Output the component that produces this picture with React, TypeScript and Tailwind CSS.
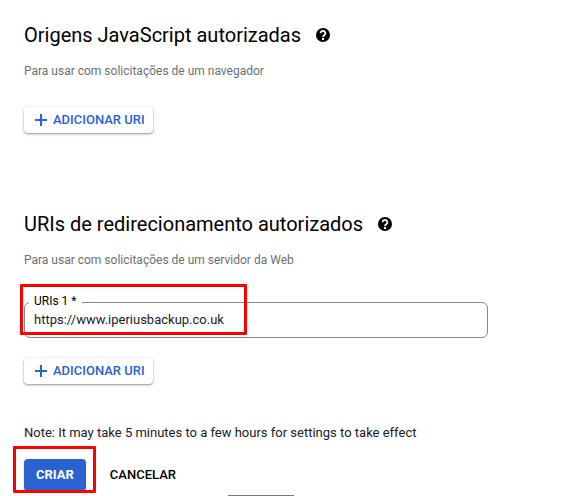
import { useState } from "react";

function HelpIcon({ label }: { label: string }) {
  return (
    <button type="button" aria-label={label} className="shrink-0 text-black">
      <svg viewBox="0 0 14 14" className="block size-3.5" fill="none">
        <circle cx="7" cy="7" r="7" fill="currentColor" />
        <path
          d="M4.600 5.300a2.400 2.300 0 1 1 4 1.600C7.700 7.600 7 7.900 7 9"
          stroke="white"
          strokeWidth="1.800"
        />
        <path d="M6 10h2v2H6z" fill="white" />
      </svg>
    </button>
  );
}

function SectionHeader({ title, description }: { title: string; description: string }) {
  return (
    <>
      <div className="flex items-center gap-[15px]">
        <h2 className="text-xl leading-6 text-black">{title}</h2>
        <HelpIcon label={`Ajuda: ${title}`} />
      </div>
      <p className="mt-4 text-xs leading-4 text-[#6b6f73]">{description}</p>
    </>
  );
}

function AddUriButton() {
  return (
    <button
      type="button"
      className="flex h-[26px] items-center gap-1.5 rounded-sm bg-white pr-2 pl-[11px] text-[13px] font-medium text-[#2a62d0] shadow-[0_1px_2px_rgba(0,0,0,0.35),0_1px_4px_rgba(0,0,0,0.12)]"
    >
      <svg viewBox="0 0 12 12" className="size-3" fill="currentColor">
        <path d="M5 0h2v5h5v2H7v5H5V7H0V5h5z" />
      </svg>
      ADICIONAR URI
    </button>
  );
}

export default function App() {
  const [uri, setUri] = useState("https://www.iperiusbackup.co.uk");

  return (
    <main className="overflow-hidden bg-white px-6 pt-[23px] font-[Roboto,sans-serif] text-[#202124]">
      <section>
        <SectionHeader
          title="Origens JavaScript autorizadas"
          description="Para usar com solicitações de um navegador"
        />
        <div className="mt-7">
          <AddUriButton />
        </div>
      </section>

      <section className="mt-[79px]">
        <SectionHeader
          title="URIs de redirecionamento autorizados"
          description="Para usar com solicitações de um servidor da Web"
        />
        <div className="relative mt-[34px] max-w-[464px]">
          <label
            htmlFor="uri-1"
            className="absolute -top-[9px] left-[5px] bg-white px-[5px] text-xs leading-4 text-black"
          >
            URIs 1 *
          </label>
          <input
            id="uri-1"
            type="text"
            value={uri}
            onChange={(e) => setUri(e.target.value)}
            className="block h-9 w-full rounded-md border border-[#80868b] px-[9px] pb-0.5 text-[13px] text-[#202124] outline-none"
          />
          <div className="pointer-events-none absolute -top-[18px] -left-1 h-[51px] w-[227px] rounded-[1px] border-3 border-[#ff0000]"></div>
        </div>
        <div className="mt-5">
          <AddUriButton />
        </div>
      </section>

      <p className="mt-[39px] text-[13px] leading-5">
        Note: It may take 5 minutes to a few hours for settings to take effect
      </p>

      <div className="mt-4 flex items-center gap-3">
        <div className="relative">
          <button
            type="submit"
            className="block h-8 rounded-sm bg-[#2a62d0] px-3 text-[13px] font-bold text-white shadow-sm"
          >
            CRIAR
          </button>
          <div className="pointer-events-none absolute -top-[13px] -right-[10px] -bottom-[2px] -left-[11px] rounded-[1px] border-3 border-[#ff0000]"></div>
        </div>
        <button type="button" className="h-8 px-3 text-[13px] font-medium text-black">
          CANCELAR
        </button>
      </div>
      <div className="mt-1 ml-[204px] h-px w-[66px] bg-[#77797c]"></div>
    </main>
  );
}
